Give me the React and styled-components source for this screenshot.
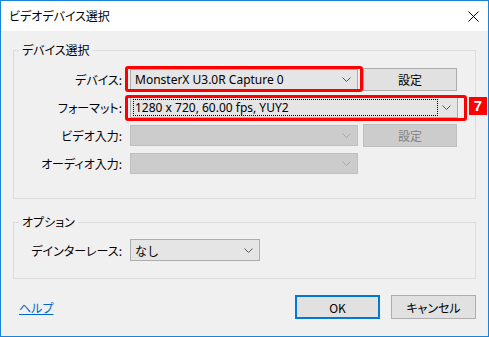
import React from "react";
import styled, { createGlobalStyle } from "styled-components";

const Global = createGlobalStyle`
  html, body {
    margin: 0;
    padding: 0;
    background: #f0f0f0;
  }
  body {
    font-family: "Noto Sans", "Noto Sans CJK JP", sans-serif;
    font-size: 12px;
    color: #000;
  }
`;

const jp = `"Noto Sans CJK JP", "Noto Sans", sans-serif`;

const Window = styled.div`
  width: 489px;
  height: 337px;
  box-sizing: border-box;
  border: 1px solid #1883d7;
  background: #f0f0f0;
  display: flex;
  flex-direction: column;
  overflow: hidden;
`;

const TitleBar = styled.div`
  height: 30px;
  background: #fff;
  display: flex;
  align-items: center;
  justify-content: space-between;
  padding: 0 9px 0 8px;
  flex-shrink: 0;
`;

const Title = styled.span`
  font-family: ${jp};
  font-size: 12px;
  font-feature-settings: "palt";
  line-height: 16px;
`;

const Body = styled.div`
  flex: 1;
  display: flex;
  flex-direction: column;
  padding: 11px 12px 0 12px;
`;

const Group = styled.fieldset`
  margin: 0 0 ${(p) => p.$mb || 0}px 0;
  padding: 0;
  border: 1px solid #dcdcdc;
  min-width: 0;
`;

const Legend = styled.legend`
  margin-left: 5px;
  padding: 0 3px;
  font-family: ${jp};
  font-feature-settings: "palt";
  font-size: 12px;
  line-height: 16px;
`;

const FieldGrid = styled.div`
  display: grid;
  grid-template-columns: 111px 228px 94px;
  grid-auto-rows: 22px;
  column-gap: 5px;
  row-gap: 6px;
  align-items: center;
  padding: ${(p) => p.$pt}px 0 ${(p) => p.$pb}px 0;
`;

const Label = styled.label`
  justify-self: end;
  padding-right: 3px;
  font-family: ${jp};
  font-feature-settings: "palt";
  font-size: 12px;
  white-space: nowrap;
`;

const ComboWrap = styled.div`
  position: relative;
  width: ${(p) => (p.$w ? `${p.$w}px` : "auto")};
  grid-column: ${(p) => p.$span || "auto"};
`;

const Combo = styled.div`
  height: ${(p) => p.$h || 21}px;
  box-sizing: border-box;
  border: 1px solid ${(p) => (p.$disabled ? "#bfbfbf" : "#adadad")};
  background: ${(p) => (p.$disabled ? "#cccccc" : "#e5e5e5")};
  display: flex;
  align-items: center;
  padding: 0 6px 0 2px;
  gap: 4px;
`;

const ComboText = styled.span`
  flex: 1;
  height: 17px;
  box-sizing: border-box;
  display: flex;
  align-items: center;
  padding: 0 1px;
  border: 1px ${(p) => (p.$focus ? "dotted #000" : "solid transparent")};
  font-family: ${(p) => (p.$jp ? jp : `"Noto Sans", "Noto Sans CJK JP", sans-serif`)};
  font-size: 12px;
  white-space: nowrap;
  overflow: hidden;
`;

const Highlight = styled.span`
  position: absolute;
  left: ${(p) => p.$l}px;
  right: ${(p) => p.$r}px;
  top: ${(p) => p.$t}px;
  bottom: ${(p) => p.$b}px;
  border: 3px solid #ff0000;
  border-radius: 3px;
  pointer-events: none;
`;

const Badge = styled.span`
  position: absolute;
  left: calc(100% + 11px);
  top: 0;
  width: 18px;
  height: 18px;
  background: #ff0000;
  color: #fff;
  font-family: "Liberation Sans", sans-serif;
  font-weight: bold;
  font-size: 15px;
  line-height: 18px;
  text-align: center;
`;

const Button = styled.button`
  height: ${(p) => p.$h || 23}px;
  width: ${(p) => p.$w || 94}px;
  box-sizing: border-box;
  margin: 0;
  padding: 0;
  border: ${(p) =>
    p.$default ? "2px solid #0078d7" : `1px solid ${p.disabled ? "#bfbfbf" : "#adadad"}`};
  background: ${(p) => (p.disabled ? "#cccccc" : "#e1e1e1")};
  color: ${(p) => (p.disabled ? "#838383" : "#000")};
  font-family: ${jp};
  font-feature-settings: "palt";
  font-size: 12px;
`;

const Footer = styled.div`
  display: flex;
  align-items: center;
  justify-content: space-between;
  margin-top: 16px;
  padding-left: 6px;
`;

const HelpLink = styled.a`
  color: #0066cc;
  text-decoration: underline;
  font-family: ${jp};
  font-feature-settings: "palt";
  font-size: 12px;
`;

const ButtonRow = styled.div`
  display: flex;
  gap: 11px;
`;

const Chevron = ({ disabled }) => (
  <svg width="9" height="5" viewBox="0 0 9 5">
    <polyline
      points="0.5,0.5 4.5,4.5 8.5,0.5"
      fill="none"
      stroke={disabled ? "#a8a8a8" : "#555"}
      strokeWidth="1"
    />
  </svg>
);

const CloseIcon = () => (
  <svg width="11" height="11" viewBox="0 0 11 11">
    <path d="M0.5 0.5 L10.5 10.5 M10.5 0.5 L0.5 10.5" stroke="#000" strokeWidth="1" />
  </svg>
);

const App = () => {
  return (
    <>
      <Global />
      <Window>
        <TitleBar>
          <Title>ビデオデバイス選択</Title>
          <CloseIcon />
        </TitleBar>
        <Body>
          <Group $mb={15}>
            <Legend>デバイス選択</Legend>
            <FieldGrid $pt={10} $pb={24}>
              <Label>デバイス:</Label>
              <ComboWrap>
                <Combo>
                  <ComboText>MonsterX U3.0R Capture 0</ComboText>
                  <Chevron />
                </Combo>
                <Highlight $l={-5} $r={-5} $t={-3} $b={-2} />
              </ComboWrap>
              <Button>設定</Button>

              <Label>フォーマット:</Label>
              <ComboWrap $span="2 / 4" $w={328}>
                <Combo>
                  <ComboText $focus>1280 x 720, 60.00 fps, YUY2</ComboText>
                  <Chevron />
                </Combo>
                <Highlight $l={-5} $r={-9} $t={-2} $b={-3} />
                <Badge>7</Badge>
              </ComboWrap>

              <Label>ビデオ入力:</Label>
              <ComboWrap>
                <Combo $disabled>
                  <ComboText />
                  <Chevron disabled />
                </Combo>
              </ComboWrap>
              <Button disabled>設定</Button>

              <Label>オーディオ入力:</Label>
              <ComboWrap>
                <Combo $disabled>
                  <ComboText />
                  <Chevron disabled />
                </Combo>
              </ComboWrap>
            </FieldGrid>
          </Group>

          <Group>
            <Legend>オプション</Legend>
            <FieldGrid $pt={9} $pb={17}>
              <Label>デインターレース:</Label>
              <ComboWrap $w={130}>
                <Combo $h={22}>
                  <ComboText $jp>なし</ComboText>
                  <Chevron />
                </Combo>
              </ComboWrap>
            </FieldGrid>
          </Group>

          <Footer>
            <HelpLink href="#">ヘルプ</HelpLink>
            <ButtonRow>
              <Button $default $w={85} $h={24}>
                OK
              </Button>
              <Button $w={85} $h={24}>
                キャンセル
              </Button>
            </ButtonRow>
          </Footer>
        </Body>
      </Window>
    </>
  );
};

export default App;
